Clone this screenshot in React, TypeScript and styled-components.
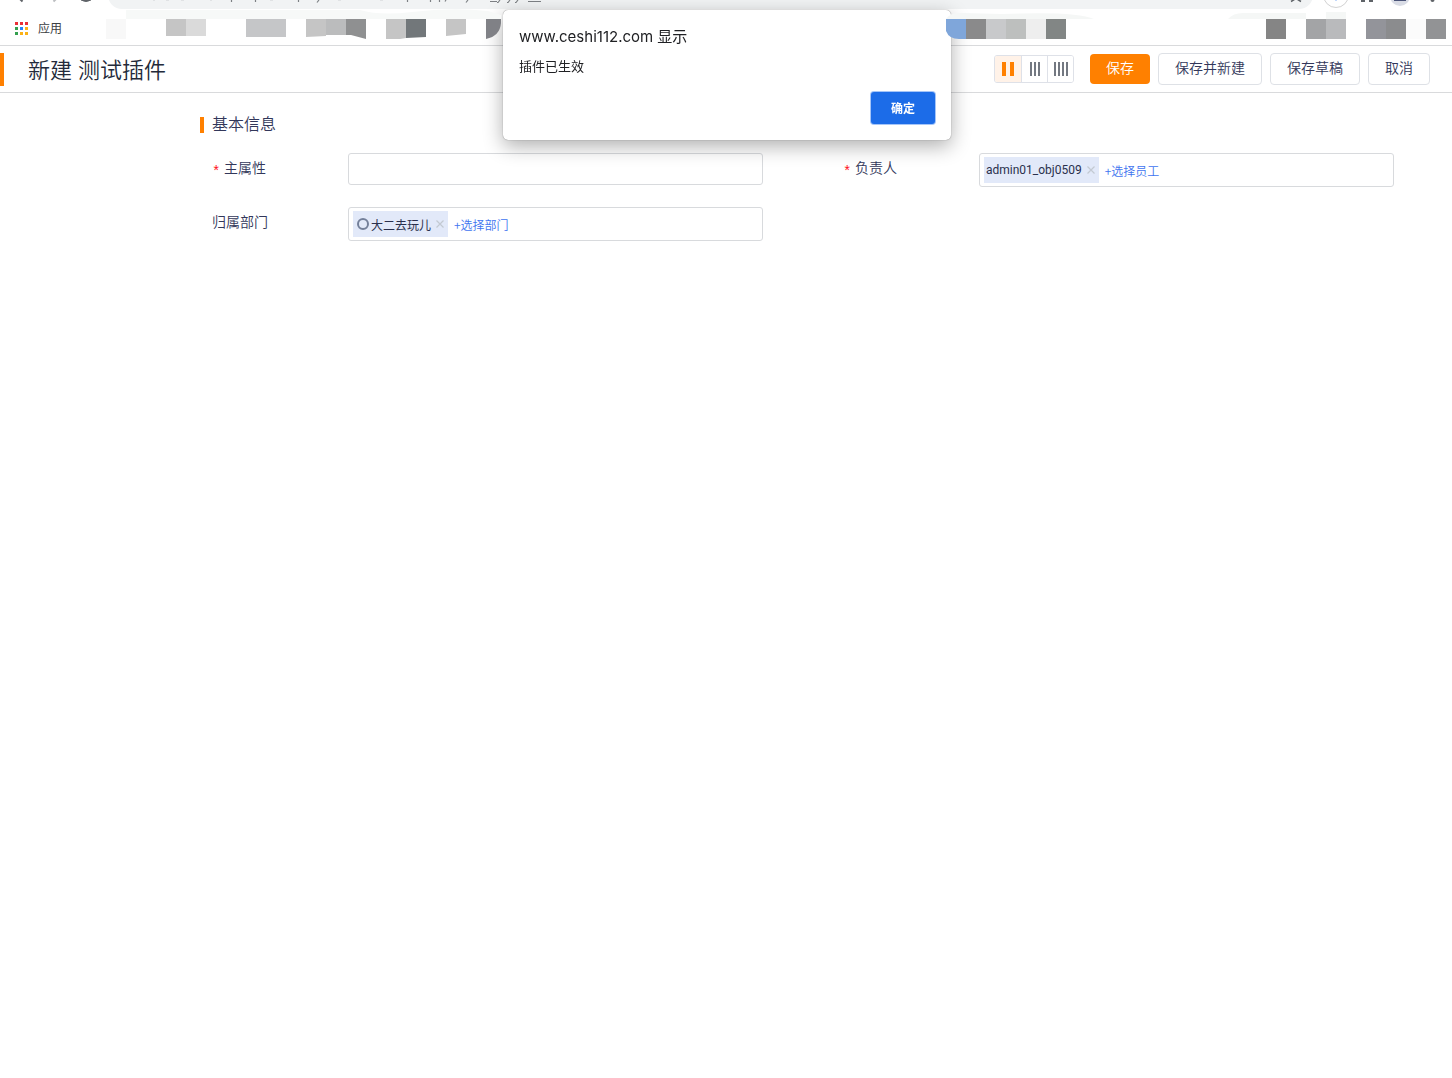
import React, { useState } from "react";
import styled, { createGlobalStyle } from "styled-components";

const GlobalStyle = createGlobalStyle`
  *, *::before, *::after { box-sizing: border-box; }
  body {
    margin: 0;
    background: #fff;
    color: #32375a;
    font-family: "Liberation Sans", "Noto Sans CJK SC", sans-serif;
    font-size: 14px;
  }
  button, input { font: inherit; }
`;

const Toolbar = styled.div`
  display: flex;
  align-items: flex-end;
  height: 9px;
  overflow: hidden;
`;

const Omnibox = styled.div`
  display: flex;
  align-items: flex-end;
  justify-content: space-between;
  flex: 1;
  height: 28px;
  border-radius: 14px;
  background: #f1f3f4;
`;

const Drawing = styled.svg`
  display: block;
  flex: none;
`;

const Bookmarks = styled.div`
  display: flex;
  align-items: flex-start;
  height: 37px;
  padding: 0 6px 0 15px;
  border-bottom: 1px solid #d9dadc;
`;

const AppsLink = styled.a`
  display: flex;
  align-items: center;
  gap: 10px;
  width: 91px;
  height: 39px;
  color: #3c4043;
  font-size: 12px;
  text-decoration: none;
`;

const AppsText = styled.span`
  padding-bottom: 3px;
`;

const Mosaic = styled(Drawing)<{ $end?: boolean }>`
  position: relative;
  z-index: 3;
  margin-left: ${(p) => (p.$end ? "auto" : "0")};
`;

const Header = styled.header`
  display: flex;
  align-items: center;
  justify-content: space-between;
  height: 47px;
  padding-right: 22px;
  border-bottom: 1px solid #d9dadc;
`;

const Title = styled.h1`
  margin: 0;
  padding: 2px 0 0 24px;
  border-left: 4px solid #ff8000;
  color: #232a3a;
  font-size: 22px;
  font-weight: 350;
  line-height: 31px;
`;

const Actions = styled.div`
  display: flex;
  align-items: center;
  gap: 8px;
`;

const Switcher = styled.div`
  display: flex;
  height: 28px;
  margin-right: 8px;
  border: 1px solid #dee1e8;
  border-radius: 3px;
  overflow: hidden;
`;

const SwitchButton = styled.button<{ $active: boolean }>`
  display: flex;
  align-items: center;
  justify-content: center;
  width: 26px;
  padding: 0;
  border: 0;
  background: ${(p) => (p.$active ? "#fff2e8" : "#fff")};
  color: ${(p) => (p.$active ? "#ff8000" : "#737881")};
  & + & {
    border-left: 1px solid #dee1e8;
  }
`;

const Button = styled.button<{ $primary?: boolean }>`
  height: ${(p) => (p.$primary ? "30px" : "32px")};
  padding: 0 16px 2px;
  border: ${(p) => (p.$primary ? "0" : "1px solid #dee1e6")};
  border-radius: 4px;
  background: ${(p) => (p.$primary ? "#ff8000" : "#fff")};
  color: ${(p) => (p.$primary ? "#fff" : "#32375a")};
  font-size: 14px;
  font-weight: 350;
  line-height: 28px;
`;

const Main = styled.main`
  padding: 20px 58px 20px 200px;
`;

const SectionTitle = styled.h2`
  display: flex;
  align-items: center;
  gap: 8px;
  margin: 0 0 16px;
  font-size: 16px;
  font-weight: 350;
  line-height: 24px;
  &::before {
    content: "";
    width: 4px;
    height: 16px;
    background: #ff8000;
  }
`;

const Form = styled.form`
  display: grid;
  grid-template-columns: 1fr 1fr;
  gap: 20px 80px;
  padding-left: 12px;
`;

const Field = styled.div`
  display: flex;
  align-items: flex-start;
`;

const Label = styled.label`
  flex: none;
  width: 136px;
  font-weight: 350;
  line-height: 30px;
`;

const Required = styled.span`
  display: inline-block;
  width: 12px;
  color: #ff1020;
  font-family: "Liberation Mono", monospace;
  line-height: 14px;
  vertical-align: -3px;
`;

const TextInput = styled.input`
  flex: 1;
  min-width: 0;
  height: 32px;
  padding: 0 8px;
  border: 1px solid #d8dadd;
  border-radius: 3px;
`;

const PickerBox = styled.div`
  display: flex;
  align-items: center;
  flex: 1;
  gap: 6px;
  min-width: 0;
  height: 34px;
  padding: 0 4px;
  border: 1px solid #d8dadd;
  border-radius: 3px;
`;

const Tag = styled.span`
  display: flex;
  align-items: center;
  height: 26px;
  padding: 0 3px 0 2px;
  background: #e2e9f9;
  color: #2a304d;
  font-family: Roboto, "Noto Sans CJK SC", sans-serif;
  font-size: 12px;
`;

const RemoveButton = styled.button`
  display: flex;
  margin-left: 4px;
  padding: 0;
  border: 0;
  background: none;
  color: #c3c9d2;
`;

const PickButton = styled.button`
  padding: 0;
  border: 0;
  background: none;
  color: #3f75f0;
  font-family: "Noto Sans CJK SC", sans-serif;
  font-size: 12px;
  font-weight: 350;
`;

const Overlay = styled.div`
  position: fixed;
  inset: 0;
  z-index: 2;
  display: flex;
  align-items: flex-start;
  justify-content: center;
  padding: 10px 0 0 2px;
`;

const Dialog = styled.div`
  display: flex;
  flex-direction: column;
  width: 448px;
  padding: 16px;
  border-radius: 5px;
  background: #fff;
  box-shadow: 0 0 1px rgba(0, 0, 0, 0.6), 0 6px 20px rgba(0, 0, 0, 0.32);
  color: #202124;
  font-family: Inter, "Noto Sans CJK SC", sans-serif;
`;

const DialogTitle = styled.h2`
  margin: 0;
  font-size: 15px;
  font-weight: 400;
  line-height: 22px;
`;

const DialogText = styled.p`
  margin: 8px 0 16px;
  font-size: 13px;
  line-height: 20px;
`;

const ConfirmButton = styled.button`
  align-self: flex-end;
  height: 32px;
  padding: 0 20px 2px;
  border: 0;
  border-radius: 3px;
  background: #1c6ce8;
  box-shadow: 0 0 0 1px #a5c5f8;
  color: #fff;
  font-size: 12px;
  font-weight: 700;
`;

type Block = [x: number, color: string, bottom?: number];

const leftBlocks: Block[] = [
  [106, "#f8f8f8"],
  [166, "#c5c5c5", 36],
  [186, "#dadada", 36],
  [246, "#c5c6c8", 37],
  [266, "#c5c6c8", 37],
];

const rightBlocks: Block[] = [
  [966, "#8a8a8b"],
  [986, "#c8c9cb"],
  [1006, "#bdbfbe"],
  [1026, "#eeeeee"],
  [1046, "#828685"],
  [1266, "#858585"],
  [1306, "#a3a4a6"],
  [1326, "#b9babc"],
  [1366, "#93949a"],
  [1386, "#8b8c8e"],
  [1406, "#fbfbfb"],
  [1426, "#929395"],
];

const Blocks = ({ items }: { items: Block[] }) => (
  <>
    {items.map(([x, color, bottom = 39]) => (
      <rect key={x} x={x} y={19} width={20} height={bottom - 19} fill={color} />
    ))}
  </>
);

const appColors = ["#ea2f36", "#ea2f36", "#ea2f36", "#34a04f", "#2684fc", "#fbb116", "#34a04f", "#fbb116", "#fbb116"];

const AppsIcon = () => (
  <Drawing width="13" height="13" viewBox="0 0 13 13" aria-hidden="true">
    {appColors.map((color, i) => (
      <rect key={i} x={(i % 3) * 5} y={Math.floor(i / 3) * 5} width="3" height="3" fill={color} />
    ))}
  </Drawing>
);

const ColumnsIcon = ({ count }: { count: number }) => {
  const bar = count === 2 ? 4 : 2;
  const step = count === 2 ? 8 : 4;
  const width = step * (count - 1) + bar;
  return (
    <svg width={width} height="14" viewBox={`0 0 ${width} 14`} fill="currentColor" aria-hidden="true">
      {Array.from({ length: count }, (_, i) => (
        <rect key={i} x={i * step} width={bar} height="14" />
      ))}
    </svg>
  );
};

const Remove = ({ name }: { name: string }) => (
  <RemoveButton type="button" aria-label={`移除 ${name}`}>
    <svg width="10" height="10" viewBox="0 0 10 10" stroke="currentColor" strokeWidth="1.2">
      <path d="M1.500 1.500l7 7M8.500 1.500l-7 7" />
    </svg>
  </RemoveButton>
);

export default function App() {
  const [columns, setColumns] = useState(2);
  const [open, setOpen] = useState(true);

  return (
    <>
      <GlobalStyle />
      <Toolbar>
        <Drawing width="108" height="9" viewBox="0 0 108 9" fill="none" aria-hidden="true">
          <path d="M20 -1l2.500 2.500" stroke="#5f6368" strokeWidth="2" />
          <path d="M56 -1l-2.500 2.500" stroke="#bcbec1" strokeWidth="2" />
          <path d="M81 0q5 3 10 0" fill="#5f6368" stroke="#5f6368" />
        </Drawing>
        <Omnibox>
          <Drawing width="450" height="9" viewBox="108 0 450 9" fill="none" stroke="#7d8084" aria-hidden="true">
            <path d="M231.500 0v2M255.500 0v2M298.500 0v2M407.500 0v2M430.500 0v2M439.500 0v2" strokeWidth="1.200" />
            <path d="M319 0l-2 2.500M446 0l-1 1.500M468 0l-2 2.500M500 0l-2 2.500h-1M510 0l-2 2.500h-1M518 0l-2 2.500h-1" strokeWidth="1.200" />
            <path d="M490 1.500h7M528 1.500h13" />
            <path d="M153 0h2M166 0h3M181 0h3M210 0h2M270 0h3M338 0h3M380 0h3" stroke="#d0d2d4" />
          </Drawing>
          <Drawing width="26" height="9" viewBox="1287 0 26 9" fill="none" aria-hidden="true">
            <path d="M1291 1.500l5-3 5 3" stroke="#5f6368" strokeWidth="1.500" />
          </Drawing>
        </Omnibox>
        <Drawing width="139" height="9" viewBox="1313 0 139 9" aria-hidden="true">
          <circle cx="1336" cy="-5" r="12.500" fill="#fff" stroke="#d2d2d2" />
          <path d="M1335 0h2v1h-2z" fill="#c3d8fb" />
          <path d="M1361 0h4v2h-4zM1369 0h4v2h-4z" fill="#5f6368" />
          <circle cx="1400" cy="-4" r="10" fill="#d9dce5" />
          <path d="M1394 0h12v1h-12z" fill="#4a5478" />
          <circle cx="1432.500" cy="0" r="2" fill="#5f6368" />
        </Drawing>
      </Toolbar>

      <Bookmarks>
        <AppsLink href="#apps">
          <AppsIcon />
          <AppsText>应用</AppsText>
        </AppsLink>
        <Mosaic width="396" height="36" viewBox="106 9 396 36" aria-hidden="true">
          <path d="M126 10h234q20 6 52 2 40-5 76-1l13 4v4H126z" fill="#f7f9f8" />
          <Blocks items={leftBlocks} />
          <path d="M306 19h20v17l-20 1z" fill="#c5c5c5" />
          <path d="M326 19h20v16h-20z" fill="#bbbcbd" />
          <path d="M346 19h20v20l-15-4h-5z" fill="#8f9091" />
          <path d="M386 19h20v19l-6 1h-14z" fill="#c5c5c5" />
          <path d="M406 19h20v18l-20 1z" fill="#72777a" />
          <path d="M446 19h20v15l-20 2z" fill="#c5c5c5" />
          <path d="M486 19h15v4q-1 13-15 16z" fill="#808186" />
        </Mosaic>
        <Mosaic $end width="500" height="36" viewBox="946 9 500 36" aria-hidden="true">
          <path d="M946 19q4-7 16-6l40 1q74-3 92 5zM1228 19q5-6 15-6h63v6zM1326 12h20v7h-20z" fill="#f5f7f6" />
          <path d="M946 19h20v20h-7q-10 0-13-8z" fill="#7fa6da" />
          <Blocks items={rightBlocks} />
        </Mosaic>
      </Bookmarks>

      <Header>
        <Title>新建 测试插件</Title>
        <Actions>
          <Switcher role="group" aria-label="列数">
            {[2, 3, 4].map((n) => (
              <SwitchButton
                key={n}
                type="button"
                aria-label={`${n} 列`}
                aria-pressed={columns === n}
                $active={columns === n}
                onClick={() => setColumns(n)}
              >
                <ColumnsIcon count={n} />
              </SwitchButton>
            ))}
          </Switcher>
          <Button type="button" $primary>保存</Button>
          <Button type="button">保存并新建</Button>
          <Button type="button">保存草稿</Button>
          <Button type="button">取消</Button>
        </Actions>
      </Header>

      <Main>
        <SectionTitle>基本信息</SectionTitle>
        <Form>
          <Field>
            <Label htmlFor="main-attribute"><Required>*</Required>主属性</Label>
            <TextInput id="main-attribute" type="text" />
          </Field>
          <Field>
            <Label htmlFor="owner"><Required>*</Required>负责人</Label>
            <PickerBox>
              <Tag>admin01_obj0509<Remove name="admin01_obj0509" /></Tag>
              <PickButton id="owner" type="button">+选择员工</PickButton>
            </PickerBox>
          </Field>
          <Field>
            <Label htmlFor="department">归属部门</Label>
            <PickerBox>
              <Tag>
                <svg width="16" height="14" viewBox="0 0 16 14" fill="none" aria-hidden="true">
                  <circle cx="8" cy="7" r="5" stroke="#74809a" strokeWidth="2" />
                </svg>
                大二去玩儿
                <Remove name="大二去玩儿" />
              </Tag>
              <PickButton id="department" type="button">+选择部门</PickButton>
            </PickerBox>
          </Field>
        </Form>
      </Main>

      {open && (
        <Overlay>
          <Dialog role="alertdialog" aria-labelledby="alert-title" aria-describedby="alert-text">
            <DialogTitle id="alert-title">www.ceshi112.com 显示</DialogTitle>
            <DialogText id="alert-text">插件已生效</DialogText>
            <ConfirmButton type="button" onClick={() => setOpen(false)}>确定</ConfirmButton>
          </Dialog>
        </Overlay>
      )}
    </>
  );
}
